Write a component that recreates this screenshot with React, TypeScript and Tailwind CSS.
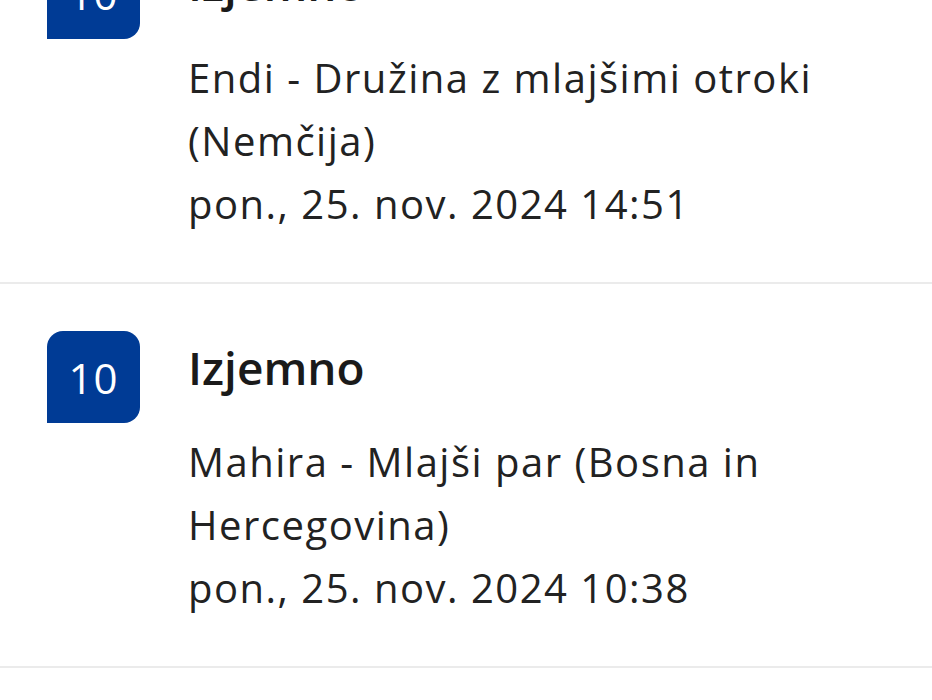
const REVIEWS = [
  {
    score: "10",
    label: "Izjemno",
    author: "Endi - Družina z mlajšimi otroki (Nemčija)",
    date: "pon., 25. nov. 2024 14:51",
  },
  {
    score: "10",
    label: "Izjemno",
    author: "Mahira - Mlajši par (Bosna in Hercegovina)",
    date: "pon., 25. nov. 2024 10:38",
  },
];

const ReviewRow = ({ score, label, author, date }: (typeof REVIEWS)[number]) => (
  <div className="border-b-2 border-[#ebebeb]">
    <div className="flex pl-[47px] pr-8 pt-[47px] pb-[47px]">
      <div
        className="flex h-[92px] w-[93px] shrink-0 items-center justify-center rounded-t-[16px]
        rounded-br-[16px] bg-[#003b95] text-[42px] tracking-[1px] text-white"
      >
        {score}
      </div>
      <div className="ml-[48px] text-[#1a1a1a]">
        <div className="text-[46px] font-semibold leading-[72px]">{label}</div>
        <div className="mt-[27px] text-[40px] leading-[63px] tracking-[1.5px] text-[#222]">
          <div>{author}</div>
          <div>{date}</div>
        </div>
      </div>
    </div>
  </div>
);

export default function App() {
  return (
    <div
      className="h-[700px] overflow-hidden bg-white"
      style={{ fontFamily: "'Open Sans', 'Noto Sans', sans-serif" }}
    >
      <div className="-mt-[100px]">
        {REVIEWS.map((r, i) => (
          <ReviewRow key={i} {...r} />
        ))}
      </div>
    </div>
  );
}
